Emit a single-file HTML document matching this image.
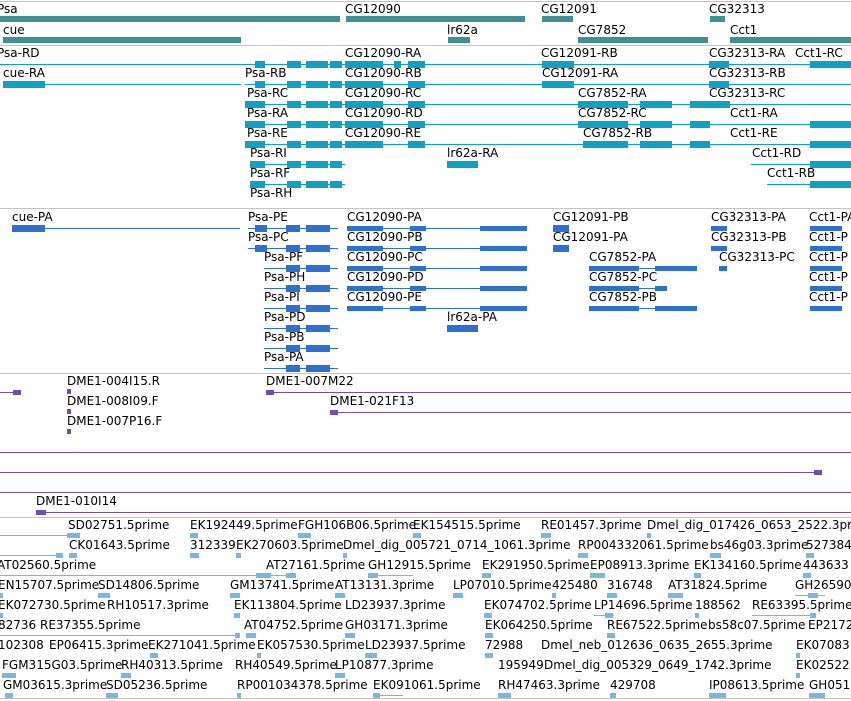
<!DOCTYPE html>
<html><head><meta charset="utf-8"><style>
html,body{margin:0;padding:0;background:#fff;width:851px;height:701px;overflow:hidden;position:relative}
div{position:absolute}
.t{font:12px "DejaVu Sans","Liberation Sans",sans-serif;line-height:12px;white-space:nowrap;color:#000}
.s{left:0;width:851px;height:1px;background:#c4c4c4}
.g{background:#3e9096;height:6px}
.c{background:#0ea1c3}
.b{background:#2e6fd4}
.p{background:#6c4fb4}
.e{background:#78b7e0}
.l{height:1px}
.k{height:7px}
.m{height:5px}
</style></head><body>
<!-- separators -->
<div class="s" style="top:1px"></div>
<div class="s" style="top:45px"></div>
<div class="s" style="top:208px"></div>
<div class="s" style="top:373px"></div>
<div class="s" style="top:517px"></div>
<div class="s" style="top:698px"></div>

<!-- Track 1 genes -->
<div class="t" style="left:-3px;top:3px">Psa</div>
<div class="g" style="left:0;top:16px;width:340px"></div>
<div class="g" style="left:346px;top:16px;width:179px"></div>
<div class="t" style="left:345px;top:3px">CG12090</div>
<div class="t" style="left:541px;top:3px">CG12091</div>
<div class="g" style="left:542px;top:16px;width:31px"></div>
<div class="t" style="left:709px;top:3px">CG32313</div>
<div class="g" style="left:710px;top:16px;width:15px"></div>
<div class="t" style="left:3px;top:24px">cue</div>
<div class="g" style="left:3px;top:37px;width:238px"></div>
<div class="t" style="left:447px;top:24px">lr62a</div>
<div class="g" style="left:448px;top:37px;width:22px"></div>
<div class="t" style="left:578px;top:24px">CG7852</div>
<div class="g" style="left:578px;top:37px;width:130px"></div>
<div class="t" style="left:730px;top:24px">Cct1</div>
<div class="g" style="left:730px;top:37px;width:121px"></div>

<!-- Track 2 transcripts -->
<div class="t" style="left:-3px;top:47px">Psa-RD</div>
<div class="t" style="left:345px;top:47px">CG12090-RA</div>
<div class="t" style="left:541px;top:47px">CG12091-RB</div>
<div class="t" style="left:709px;top:47px">CG32313-RA</div>
<div class="t" style="left:795px;top:47px">Cct1-RC</div>
<div class="c l" style="left:0;top:64px;width:851px"></div>
<div class="t" style="left:3px;top:67px">cue-RA</div>
<div class="t" style="left:245px;top:67px">Psa-RB</div>
<div class="t" style="left:345px;top:67px">CG12090-RB</div>
<div class="t" style="left:542px;top:67px">CG12091-RA</div>
<div class="t" style="left:709px;top:67px">CG32313-RB</div>
<div class="c l" style="left:3px;top:84px;width:238px"></div>
<div class="c k" style="left:3px;top:81px;width:42px"></div>
<div class="c l" style="left:245px;top:84px;width:606px"></div>
<div class="c k" style="left:542px;top:81px;width:32px"></div>
<div class="c k" style="left:542px;top:61px;width:32px"></div>
<div class="c k" style="left:709px;top:61px;width:20px"></div>
<div class="c k" style="left:709px;top:81px;width:20px"></div>
<div class="c k" style="left:810px;top:61px;width:41px"></div>
<div class="t" style="left:247px;top:87px">Psa-RC</div>
<div class="t" style="left:345px;top:87px">CG12090-RC</div>
<div class="t" style="left:578px;top:87px">CG7852-RA</div>
<div class="t" style="left:709px;top:87px">CG32313-RC</div>
<div class="c l" style="left:245px;top:104px;width:606px"></div>
<div class="t" style="left:247px;top:107px">Psa-RA</div>
<div class="t" style="left:345px;top:107px">CG12090-RD</div>
<div class="t" style="left:578px;top:107px">CG7852-RC</div>
<div class="t" style="left:730px;top:107px">Cct1-RA</div>
<div class="c l" style="left:245px;top:124px;width:606px"></div>
<div class="t" style="left:247px;top:127px">Psa-RE</div>
<div class="t" style="left:345px;top:127px">CG12090-RE</div>
<div class="t" style="left:583px;top:127px">CG7852-RB</div>
<div class="t" style="left:730px;top:127px">Cct1-RE</div>
<div class="c l" style="left:245px;top:144px;width:606px"></div>
<div class="t" style="left:250px;top:147px">Psa-RI</div>
<div class="t" style="left:447px;top:147px">lr62a-RA</div>
<div class="t" style="left:752px;top:147px">Cct1-RD</div>
<div class="c l" style="left:250px;top:164px;width:95px"></div>
<div class="c k" style="left:447px;top:161px;width:31px"></div>
<div class="c l" style="left:751px;top:164px;width:100px"></div>
<div class="t" style="left:250px;top:167px">Psa-RF</div>
<div class="t" style="left:767px;top:167px">Cct1-RB</div>
<div class="c l" style="left:250px;top:184px;width:95px"></div>
<div class="c l" style="left:767px;top:184px;width:84px"></div>
<div class="t" style="left:250px;top:187px">Psa-RH</div>
<!-- transcript exon blocks -->
<div class="c k" style="left:255px;top:61px;width:10px"></div><div class="c k" style="left:287px;top:61px;width:14px"></div><div class="c k" style="left:306px;top:61px;width:22px"></div><div class="c k" style="left:330px;top:61px;width:12px"></div>
<div class="c k" style="left:345px;top:61px;width:38px"></div><div class="c k" style="left:394px;top:61px;width:7px"></div><div class="c k" style="left:408px;top:61px;width:17px"></div>
<div class="c k" style="left:255px;top:81px;width:10px"></div><div class="c k" style="left:287px;top:81px;width:14px"></div><div class="c k" style="left:306px;top:81px;width:22px"></div><div class="c k" style="left:330px;top:81px;width:12px"></div>
<div class="c k" style="left:345px;top:81px;width:38px"></div><div class="c k" style="left:408px;top:81px;width:17px"></div>
<div class="c k" style="left:245px;top:101px;width:20px"></div><div class="c k" style="left:287px;top:101px;width:14px"></div><div class="c k" style="left:306px;top:101px;width:22px"></div><div class="c k" style="left:330px;top:101px;width:12px"></div>
<div class="c k" style="left:345px;top:101px;width:38px"></div><div class="c k" style="left:408px;top:101px;width:17px"></div>
<div class="c k" style="left:245px;top:121px;width:20px"></div><div class="c k" style="left:287px;top:121px;width:14px"></div><div class="c k" style="left:306px;top:121px;width:22px"></div><div class="c k" style="left:330px;top:121px;width:12px"></div>
<div class="c k" style="left:345px;top:121px;width:38px"></div><div class="c k" style="left:408px;top:121px;width:17px"></div>
<div class="c k" style="left:245px;top:141px;width:20px"></div><div class="c k" style="left:287px;top:141px;width:14px"></div><div class="c k" style="left:306px;top:141px;width:22px"></div><div class="c k" style="left:330px;top:141px;width:12px"></div>
<div class="c k" style="left:345px;top:141px;width:38px"></div><div class="c k" style="left:408px;top:141px;width:17px"></div>
<div class="c k" style="left:250px;top:161px;width:15px"></div><div class="c k" style="left:287px;top:161px;width:14px"></div><div class="c k" style="left:306px;top:161px;width:22px"></div><div class="c k" style="left:330px;top:161px;width:12px"></div>
<div class="c k" style="left:250px;top:181px;width:15px"></div><div class="c k" style="left:287px;top:181px;width:14px"></div><div class="c k" style="left:306px;top:181px;width:22px"></div><div class="c k" style="left:330px;top:181px;width:12px"></div>
<div class="c k" style="left:578px;top:101px;width:50px"></div><div class="c k" style="left:640px;top:101px;width:32px"></div><div class="c k" style="left:690px;top:101px;width:40px"></div>
<div class="c k" style="left:578px;top:121px;width:50px"></div><div class="c k" style="left:640px;top:121px;width:32px"></div><div class="c k" style="left:690px;top:121px;width:20px"></div>
<div class="c k" style="left:583px;top:141px;width:45px"></div><div class="c k" style="left:640px;top:141px;width:32px"></div><div class="c k" style="left:690px;top:141px;width:20px"></div>
<div class="c k" style="left:810px;top:121px;width:41px"></div><div class="c k" style="left:810px;top:141px;width:41px"></div><div class="c k" style="left:810px;top:161px;width:41px"></div><div class="c k" style="left:810px;top:181px;width:41px"></div>

<!-- Track 3 proteins -->
<div class="t" style="left:12px;top:211px">cue-PA</div>
<div class="b l" style="left:12px;top:228px;width:228px"></div>
<div class="b k" style="left:12px;top:225px;width:33px"></div>
<div class="t" style="left:248px;top:211px">Psa-PE</div>
<div class="t" style="left:347px;top:211px">CG12090-PA</div>
<div class="t" style="left:553px;top:211px">CG12091-PB</div>
<div class="t" style="left:711px;top:211px">CG32313-PA</div>
<div class="t" style="left:809px;top:211px">Cct1-PA</div>
<div class="t" style="left:248px;top:231px">Psa-PC</div>
<div class="t" style="left:347px;top:231px">CG12090-PB</div>
<div class="t" style="left:553px;top:231px">CG12091-PA</div>
<div class="t" style="left:711px;top:231px">CG32313-PB</div>
<div class="t" style="left:809px;top:231px">Cct1-P</div>
<div class="t" style="left:264px;top:251px">Psa-PF</div>
<div class="t" style="left:347px;top:251px">CG12090-PC</div>
<div class="t" style="left:589px;top:251px">CG7852-PA</div>
<div class="t" style="left:719px;top:251px">CG32313-PC</div>
<div class="t" style="left:809px;top:251px">Cct1-P</div>
<div class="t" style="left:264px;top:271px">Psa-PH</div>
<div class="t" style="left:347px;top:271px">CG12090-PD</div>
<div class="t" style="left:589px;top:271px">CG7852-PC</div>
<div class="t" style="left:809px;top:271px">Cct1-P</div>
<div class="t" style="left:264px;top:291px">Psa-PI</div>
<div class="t" style="left:347px;top:291px">CG12090-PE</div>
<div class="t" style="left:589px;top:291px">CG7852-PB</div>
<div class="t" style="left:809px;top:291px">Cct1-P</div>
<div class="t" style="left:264px;top:311px">Psa-PD</div>
<div class="t" style="left:447px;top:311px">lr62a-PA</div>
<div class="t" style="left:264px;top:331px">Psa-PB</div>
<div class="t" style="left:264px;top:351px">Psa-PA</div>
<div class="b l" style="left:248px;top:228px;width:90px"></div><div class="b l" style="left:248px;top:248px;width:90px"></div>
<div class="b l" style="left:264px;top:268px;width:74px"></div><div class="b l" style="left:264px;top:288px;width:74px"></div><div class="b l" style="left:264px;top:308px;width:74px"></div><div class="b l" style="left:264px;top:328px;width:74px"></div><div class="b l" style="left:264px;top:348px;width:74px"></div><div class="b l" style="left:264px;top:368px;width:74px"></div>
<div class="b k" style="left:255px;top:225px;width:12px"></div><div class="b k" style="left:286px;top:225px;width:14px"></div><div class="b k" style="left:306px;top:225px;width:24px"></div>
<div class="b k" style="left:255px;top:245px;width:12px"></div><div class="b k" style="left:286px;top:245px;width:14px"></div><div class="b k" style="left:306px;top:245px;width:24px"></div>
<div class="b k" style="left:286px;top:265px;width:14px"></div><div class="b k" style="left:306px;top:265px;width:24px"></div>
<div class="b k" style="left:286px;top:285px;width:14px"></div><div class="b k" style="left:306px;top:285px;width:24px"></div>
<div class="b k" style="left:286px;top:305px;width:14px"></div><div class="b k" style="left:306px;top:305px;width:24px"></div>
<div class="b k" style="left:286px;top:325px;width:14px"></div><div class="b k" style="left:306px;top:325px;width:24px"></div>
<div class="b k" style="left:286px;top:345px;width:14px"></div><div class="b k" style="left:306px;top:345px;width:24px"></div>
<div class="b k" style="left:286px;top:365px;width:14px"></div><div class="b k" style="left:306px;top:365px;width:24px"></div>
<div class="b l" style="left:347px;top:228px;width:180px"></div><div class="b l" style="left:347px;top:248px;width:180px"></div><div class="b l" style="left:347px;top:268px;width:180px"></div><div class="b l" style="left:347px;top:288px;width:180px"></div><div class="b l" style="left:347px;top:308px;width:180px"></div>
<div class="b m" style="left:347px;top:226px;width:36px"></div><div class="b m" style="left:410px;top:226px;width:16px"></div><div class="b m" style="left:480px;top:226px;width:47px"></div>
<div class="b m" style="left:347px;top:246px;width:36px"></div><div class="b m" style="left:410px;top:246px;width:16px"></div><div class="b m" style="left:480px;top:246px;width:47px"></div>
<div class="b m" style="left:347px;top:266px;width:36px"></div><div class="b m" style="left:410px;top:266px;width:16px"></div><div class="b m" style="left:480px;top:266px;width:47px"></div>
<div class="b m" style="left:347px;top:286px;width:36px"></div><div class="b m" style="left:410px;top:286px;width:16px"></div><div class="b m" style="left:480px;top:286px;width:47px"></div>
<div class="b m" style="left:347px;top:306px;width:36px"></div><div class="b m" style="left:410px;top:306px;width:16px"></div><div class="b m" style="left:480px;top:306px;width:47px"></div>
<div class="b k" style="left:447px;top:325px;width:31px"></div>
<div class="b k" style="left:553px;top:225px;width:16px"></div><div class="b k" style="left:553px;top:245px;width:16px"></div>
<div class="b m" style="left:711px;top:226px;width:16px"></div><div class="b m" style="left:711px;top:246px;width:16px"></div><div class="b m" style="left:719px;top:266px;width:8px"></div>
<div class="b l" style="left:589px;top:268px;width:108px"></div><div class="b l" style="left:589px;top:288px;width:78px"></div><div class="b l" style="left:589px;top:308px;width:108px"></div>
<div class="b m" style="left:589px;top:266px;width:50px"></div><div class="b m" style="left:655px;top:266px;width:42px"></div>
<div class="b m" style="left:589px;top:286px;width:50px"></div><div class="b m" style="left:655px;top:286px;width:12px"></div>
<div class="b m" style="left:589px;top:306px;width:50px"></div><div class="b m" style="left:655px;top:306px;width:42px"></div>
<div class="b m" style="left:810px;top:226px;width:32px"></div><div class="b m" style="left:810px;top:246px;width:32px"></div><div class="b m" style="left:810px;top:266px;width:32px"></div><div class="b m" style="left:810px;top:286px;width:32px"></div><div class="b m" style="left:810px;top:306px;width:32px"></div>

<!-- Track 4 purple -->
<div class="p l" style="left:0;top:392px;width:20px"></div><div class="p m" style="left:13px;top:390px;width:8px"></div>
<div class="t" style="left:67px;top:375px">DME1-004I15.R</div><div class="p m" style="left:67px;top:389px;width:4px"></div>
<div class="t" style="left:266px;top:375px">DME1-007M22</div>
<div class="p l" style="left:266px;top:392px;width:585px"></div><div class="p m" style="left:266px;top:390px;width:8px"></div>
<div class="t" style="left:67px;top:395px">DME1-008I09.F</div><div class="p m" style="left:67px;top:409px;width:4px"></div>
<div class="t" style="left:330px;top:395px">DME1-021F13</div>
<div class="p l" style="left:330px;top:412px;width:521px"></div><div class="p m" style="left:330px;top:410px;width:8px"></div>
<div class="t" style="left:67px;top:415px">DME1-007P16.F</div><div class="p m" style="left:67px;top:429px;width:4px"></div>
<div class="p l" style="left:0;top:452px;width:851px"></div>
<div class="p l" style="left:0;top:472px;width:822px"></div><div class="p m" style="left:814px;top:470px;width:8px"></div>
<div class="p l" style="left:0;top:492px;width:851px"></div>
<div class="t" style="left:36px;top:495px">DME1-010I14</div>
<div class="p l" style="left:36px;top:512px;width:815px"></div><div class="p m" style="left:36px;top:510px;width:10px"></div>

<!-- Track 5 ESTs -->
<div class="t" style="left:68px;top:519px">SD02751.5prime</div>
<div class="t" style="left:190px;top:519px">EK192449.5prime</div>
<div class="t" style="left:298px;top:519px">FGH106B06.5prime</div>
<div class="t" style="left:413px;top:519px">EK154515.5prime</div>
<div class="t" style="left:541px;top:519px">RE01457.3prime</div>
<div class="t" style="left:647px;top:519px">Dmel_dig_017426_0653_2522.3prime</div>
<div class="e l" style="left:0;top:535px;width:72px"></div><div class="e m" style="left:67px;top:533px;width:13px"></div>
<div class="e m" style="left:190px;top:533px;width:8px"></div><div class="e m" style="left:298px;top:533px;width:13px"></div><div class="e m" style="left:413px;top:533px;width:8px"></div><div class="e m" style="left:541px;top:533px;width:10px"></div><div class="e m" style="left:647px;top:533px;width:4px"></div>

<div class="t" style="left:69px;top:539px">CK01643.5prime</div>
<div class="t" style="left:190px;top:539px">312339</div>
<div class="t" style="left:236px;top:539px">EK270603.5prime</div>
<div class="t" style="left:343px;top:539px">Dmel_dig_005721_0714_1061.3prime</div>
<div class="t" style="left:578px;top:539px">RP004332061.5prime</div>
<div class="t" style="left:710px;top:539px">bs46g03.3prime</div>
<div class="t" style="left:806px;top:539px">527384</div>
<div class="e l" style="left:0;top:555px;width:62px"></div><div class="e m" style="left:56px;top:553px;width:7px"></div><div class="e m" style="left:69px;top:553px;width:8px"></div>
<div class="e m" style="left:190px;top:553px;width:9px"></div><div class="e m" style="left:236px;top:553px;width:5px"></div><div class="e m" style="left:343px;top:553px;width:4px"></div><div class="e m" style="left:578px;top:553px;width:10px"></div><div class="e m" style="left:710px;top:553px;width:11px"></div><div class="e m" style="left:806px;top:553px;width:8px"></div>

<div class="t" style="left:-3px;top:559px">AT02560.5prime</div>
<div class="t" style="left:266px;top:559px">AT27161.5prime</div>
<div class="t" style="left:368px;top:559px">GH12915.5prime</div>
<div class="t" style="left:482px;top:559px">EK291950.5prime</div>
<div class="t" style="left:590px;top:559px">EP08913.3prime</div>
<div class="t" style="left:694px;top:559px">EK134160.5prime</div>
<div class="t" style="left:803px;top:559px">443633</div>
<div class="e l" style="left:0;top:575px;width:295px"></div><div class="e m" style="left:256px;top:573px;width:15px"></div><div class="e m" style="left:286px;top:573px;width:10px"></div>
<div class="e l" style="left:368px;top:575px;width:45px"></div><div class="e m" style="left:368px;top:573px;width:10px"></div><div class="e m" style="left:482px;top:573px;width:9px"></div><div class="e m" style="left:590px;top:573px;width:15px"></div><div class="e m" style="left:694px;top:573px;width:7px"></div><div class="e m" style="left:803px;top:573px;width:8px"></div>

<div class="t" style="left:-2px;top:579px">EN15707.5prime</div>
<div class="t" style="left:98px;top:579px">SD14806.5prime</div>
<div class="t" style="left:230px;top:579px">GM13741.5prime</div>
<div class="t" style="left:335px;top:579px">AT13131.3prime</div>
<div class="t" style="left:453px;top:579px">LP07010.5prime</div>
<div class="t" style="left:552px;top:579px">425480</div>
<div class="t" style="left:607px;top:579px">316748</div>
<div class="t" style="left:668px;top:579px">AT31824.5prime</div>
<div class="t" style="left:795px;top:579px">GH26590</div>
<div class="e m" style="left:0;top:593px;width:3px"></div><div class="e m" style="left:98px;top:593px;width:12px"></div><div class="e m" style="left:230px;top:593px;width:10px"></div><div class="e m" style="left:335px;top:593px;width:10px"></div><div class="e m" style="left:453px;top:593px;width:10px"></div><div class="e m" style="left:552px;top:593px;width:4px"></div><div class="e m" style="left:607px;top:593px;width:10px"></div><div class="e m" style="left:668px;top:593px;width:15px"></div><div class="e l" style="left:795px;top:595px;width:30px"></div><div class="e m" style="left:808px;top:593px;width:10px"></div>

<div class="t" style="left:-2px;top:599px">EK072730.5prime</div>
<div class="t" style="left:107px;top:599px">RH10517.3prime</div>
<div class="t" style="left:234px;top:599px">EK113804.5prime</div>
<div class="t" style="left:345px;top:599px">LD23937.3prime</div>
<div class="t" style="left:484px;top:599px">EK074702.5prime</div>
<div class="t" style="left:594px;top:599px">LP14696.5prime</div>
<div class="t" style="left:695px;top:599px">188562</div>
<div class="t" style="left:752px;top:599px">RE63395.5prime</div>
<div class="e m" style="left:0;top:613px;width:3px"></div><div class="e m" style="left:234px;top:613px;width:6px"></div><div class="e m" style="left:484px;top:613px;width:8px"></div><div class="e l" style="left:594px;top:615px;width:20px"></div><div class="e m" style="left:605px;top:613px;width:8px"></div><div class="e m" style="left:695px;top:613px;width:4px"></div><div class="e l" style="left:752px;top:615px;width:64px"></div><div class="e m" style="left:810px;top:613px;width:6px"></div>

<div class="t" style="left:-2px;top:619px">82736</div>
<div class="t" style="left:40px;top:619px">RE37355.5prime</div>
<div class="t" style="left:244px;top:619px">AT04752.5prime</div>
<div class="t" style="left:345px;top:619px">GH03171.3prime</div>
<div class="t" style="left:485px;top:619px">EK064250.5prime</div>
<div class="t" style="left:607px;top:619px">RE67522.5prime</div>
<div class="t" style="left:708px;top:619px">bs58c07.5prime</div>
<div class="t" style="left:808px;top:619px">EP2172</div>
<div class="e l" style="left:0;top:635px;width:240px"></div><div class="e m" style="left:235px;top:633px;width:5px"></div><div class="e m" style="left:246px;top:633px;width:10px"></div><div class="e m" style="left:345px;top:633px;width:10px"></div><div class="e m" style="left:485px;top:633px;width:8px"></div><div class="e m" style="left:607px;top:633px;width:8px"></div>

<div class="t" style="left:-2px;top:639px">102308</div>
<div class="t" style="left:49px;top:639px">EP06415.3prime</div>
<div class="t" style="left:148px;top:639px">EK271041.5prime</div>
<div class="t" style="left:257px;top:639px">EK057530.5prime</div>
<div class="t" style="left:365px;top:639px">LD23937.5prime</div>
<div class="t" style="left:485px;top:639px">72988</div>
<div class="t" style="left:541px;top:639px">Dmel_neb_012636_0635_2655.3prime</div>
<div class="t" style="left:796px;top:639px">EK07083</div>
<div class="e m" style="left:150px;top:653px;width:8px"></div><div class="e m" style="left:257px;top:653px;width:4px"></div><div class="e m" style="left:365px;top:653px;width:12px"></div><div class="e m" style="left:485px;top:653px;width:8px"></div><div class="e m" style="left:796px;top:653px;width:4px"></div>

<div class="t" style="left:2px;top:659px">FGM315G03.5prime</div>
<div class="t" style="left:121px;top:659px">RH40313.5prime</div>
<div class="t" style="left:235px;top:659px">RH40549.5prime</div>
<div class="t" style="left:335px;top:659px">LP10877.3prime</div>
<div class="t" style="left:498px;top:659px">195949</div>
<div class="t" style="left:544px;top:659px">Dmel_dig_005329_0649_1742.3prime</div>
<div class="t" style="left:796px;top:659px">EK02522</div>
<div class="e m" style="left:2px;top:673px;width:14px"></div><div class="e m" style="left:121px;top:673px;width:10px"></div><div class="e m" style="left:335px;top:673px;width:10px"></div><div class="e m" style="left:796px;top:673px;width:4px"></div>

<div class="t" style="left:3px;top:679px">GM03615.3prime</div>
<div class="t" style="left:106px;top:679px">SD05236.5prime</div>
<div class="t" style="left:237px;top:679px">RP001034378.5prime</div>
<div class="t" style="left:373px;top:679px">EK091061.5prime</div>
<div class="t" style="left:498px;top:679px">RH47463.3prime</div>
<div class="t" style="left:610px;top:679px">429708</div>
<div class="t" style="left:709px;top:679px">IP08613.5prime</div>
<div class="t" style="left:809px;top:679px">GH051</div>
<div class="e m" style="left:5px;top:693px;width:8px"></div><div class="e m" style="left:106px;top:693px;width:12px"></div><div class="e m" style="left:237px;top:693px;width:4px"></div><div class="e l" style="left:373px;top:695px;width:30px"></div><div class="e m" style="left:373px;top:693px;width:7px"></div><div class="e m" style="left:498px;top:693px;width:13px"></div><div class="e m" style="left:610px;top:693px;width:6px"></div><div class="e m" style="left:709px;top:693px;width:17px"></div><div class="e m" style="left:809px;top:693px;width:16px"></div>
</body></html>
